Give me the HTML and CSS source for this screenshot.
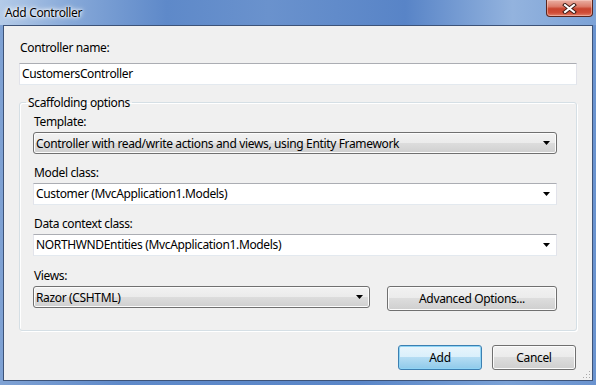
FILE: index.html
```html
<!DOCTYPE html>
<html lang="en">
<head>
  <meta charset="UTF-8" />
  <title>Add Controller</title>
  <link rel="stylesheet" href="styles.css">
</head>
<body>
<div class="window">
  <header class="titlebar">
    <span class="title">Add Controller</span>
    <div class="close-btn" aria-label="Close">
      <svg width="15" height="11" viewBox="0 0 15 11">
        <path d="M3 2l9 7M12 2l-9 7" stroke="#3b1a14" stroke-width="4" stroke-linecap="square" fill="none"/>
        <path d="M3 2l9 7M12 2l-9 7" stroke="#fff" stroke-width="2" stroke-linecap="square" fill="none"/>
      </svg>
    </div>
  </header>

  <main class="client">
    <div class="field-label first">Controller name:</div>
    <div class="textbox">CustomersController</div>

    <fieldset class="group">
      <legend>Scaffolding options</legend>

      <div class="field">
        <div class="field-label">Template:</div>
        <div class="combo combo-list">
          <span>Controller with read/write actions and views, using Entity Framework</span>
          <svg class="arrow" width="7" height="4" viewBox="0 0 7 4"><path d="M0 0h7L3.5 4z" fill="#000"/></svg>
        </div>
      </div>

      <div class="field">
        <div class="field-label">Model class:</div>
        <div class="combo combo-edit">
          <span>Customer (MvcApplication1.Models)</span>
          <svg class="arrow" width="7" height="4" viewBox="0 0 7 4"><path d="M0 0h7L3.5 4z" fill="#000"/></svg>
        </div>
      </div>

      <div class="field">
        <div class="field-label">Data context class:</div>
        <div class="combo combo-edit">
          <span>NORTHWNDEntities (MvcApplication1.Models)</span>
          <svg class="arrow" width="7" height="4" viewBox="0 0 7 4"><path d="M0 0h7L3.5 4z" fill="#000"/></svg>
        </div>
      </div>

      <div class="field views">
        <div class="field-label">Views:</div>
        <div class="views-row">
          <div class="combo combo-list views-combo">
            <span>Razor (CSHTML)</span>
            <svg class="arrow" width="7" height="4" viewBox="0 0 7 4"><path d="M0 0h7L3.5 4z" fill="#000"/></svg>
          </div>
          <button class="btn adv-btn">Advanced Options...</button>
        </div>
      </div>
    </fieldset>

    <div class="actions">
      <button class="btn btn-default">Add</button>
      <button class="btn">Cancel</button>
    </div>

    <svg class="grip" width="9" height="9" viewBox="0 0 9 9">
      <rect x="7" y="1" width="1" height="1" fill="#a8a8a8"/>
      <rect x="4" y="4" width="1" height="1" fill="#a8a8a8"/>
      <rect x="7" y="4" width="1" height="1" fill="#a8a8a8"/>
      <rect x="1" y="7" width="1" height="1" fill="#a8a8a8"/>
      <rect x="4" y="7" width="1" height="1" fill="#a8a8a8"/>
      <rect x="7" y="7" width="1" height="1" fill="#a8a8a8"/>
    </svg>
  </main>
</div>
</body>
</html>
```

FILE: styles.css
```css
:root {
  --frame: #6d95cd;
  --frame-edge: #3d5378;
  --client-bg: #f0f0f0;
  --text: #000;
  --box-top: #abadb3;
  --box-side: #e2e3ea;
  --box-bottom: #e3e9ef;
  --group-line: #d5dfe5;
}

body {
  margin: 0;
  font-family: "Segoe UI", "Noto Sans", sans-serif;
  font-size: 12px;
  letter-spacing: -0.35px;
  color: var(--text);
  background: var(--frame);
}

.window {
  width: 596px;
  height: 385px;
  display: flex;
  flex-direction: column;
  background: linear-gradient(90deg, #7fa2d4 0%, #5f8aca 20%, #5a86c8 60%, #7aa1d6 85%, #6a93cf 100%);
}

/* title bar */
.titlebar {
  height: 25px;
  display: flex;
  align-items: flex-start;
  justify-content: space-between;
  background: linear-gradient(90deg, #b4cbe8 0%, #86a8d8 12%, #5e89c9 28%, #6a92cd 45%, #5884c7 68%, #93b3de 86%, #7ca2d6 100%);
}

.title {
  padding: 5px 0 0 5px;
  line-height: 15px;
  text-shadow: 0 0 6px #fff, 0 0 4px #fff, 0 0 2px #fff;
}

.close-btn {
  width: 45px;
  height: 16px;
  margin-right: 3px;
  border: 1px solid #5a251d;
  border-top: none;
  border-radius: 0 0 4px 4px;
  background: linear-gradient(#eab0a3 0%, #dc7d6b 40%, #c8442e 55%, #d04d37 80%, #e2836d 100%);
  box-shadow: inset 0 0 0 1px rgba(255, 220, 210, 0.45);
  display: flex;
  align-items: center;
  justify-content: center;
}

/* client area */
.client {
  position: relative;
  flex: 1;
  margin: 0 3px 4px;
  padding: 14px 15px 0;
  background: var(--client-bg);
  border: 1px solid var(--frame-edge);
}

.field-label {
  line-height: 15px;
  padding-left: 1px;
  margin-bottom: 3px;
  white-space: nowrap;
}

.field-label.first {
  margin-bottom: 8px;
}

.textbox,
.combo-edit {
  height: 22px;
  box-sizing: border-box;
  padding: 0 2px;
  line-height: 20px;
  background: #fff;
  border: 1px solid var(--box-side);
  border-top-color: var(--box-top);
  border-bottom-color: var(--box-bottom);
}

/* group box */
.group {
  margin: 10px 0 0;
  padding: 4px 19px 19px 13px;
  border: 1px solid var(--group-line);
  border-radius: 3px;
  box-shadow: inset 1px 1px 0 #fff, 1px 1px 0 #fff;
}

.group legend {
  margin-left: -7px;
  padding: 0 2px;
  line-height: 15px;
}

.field + .field {
  margin-top: 11px;
}

.field.views {
  margin-top: 12px;
}

.combo {
  height: 22px;
  box-sizing: border-box;
  display: flex;
  align-items: center;
  justify-content: space-between;
  white-space: nowrap;
}

.combo .arrow {
  margin-right: 4px;
  flex: none;
}

.combo-list {
  padding: 0 2px;
  border: 1px solid #707070;
  border-radius: 3px;
  background: linear-gradient(#f2f2f2 0%, #ebebeb 50%, #dddddd 50%, #cfcfcf 100%);
  box-shadow: inset 0 0 0 1px #fcfcfc;
}

.views-row {
  display: flex;
  align-items: flex-start;
}

.views-combo {
  width: 337px;
}

/* buttons */
.btn {
  height: 25px;
  padding: 0;
  font: inherit;
  letter-spacing: inherit;
  color: var(--text);
  border: 1px solid #707070;
  border-radius: 3px;
  background: linear-gradient(#f2f2f2 0%, #ebebeb 50%, #dddddd 50%, #cfcfcf 100%);
  box-shadow: inset 0 0 0 1px #fcfcfc;
}

.adv-btn {
  width: 170px;
  margin-left: auto;
}

.btn-default {
  border-color: #3c7fb1;
  background: linear-gradient(#e8f5fc 0%, #d9effb 50%, #b4dcf3 50%, #8fcaea 100%);
  box-shadow: inset 0 0 0 1px #8fd4f5;
}

.actions {
  margin-top: 14px;
  padding-right: 1px;
  display: flex;
  justify-content: flex-end;
  gap: 10px;
}

.actions .btn {
  width: 84px;
}

.grip {
  position: absolute;
  right: 1px;
  bottom: 1px;
}
```
